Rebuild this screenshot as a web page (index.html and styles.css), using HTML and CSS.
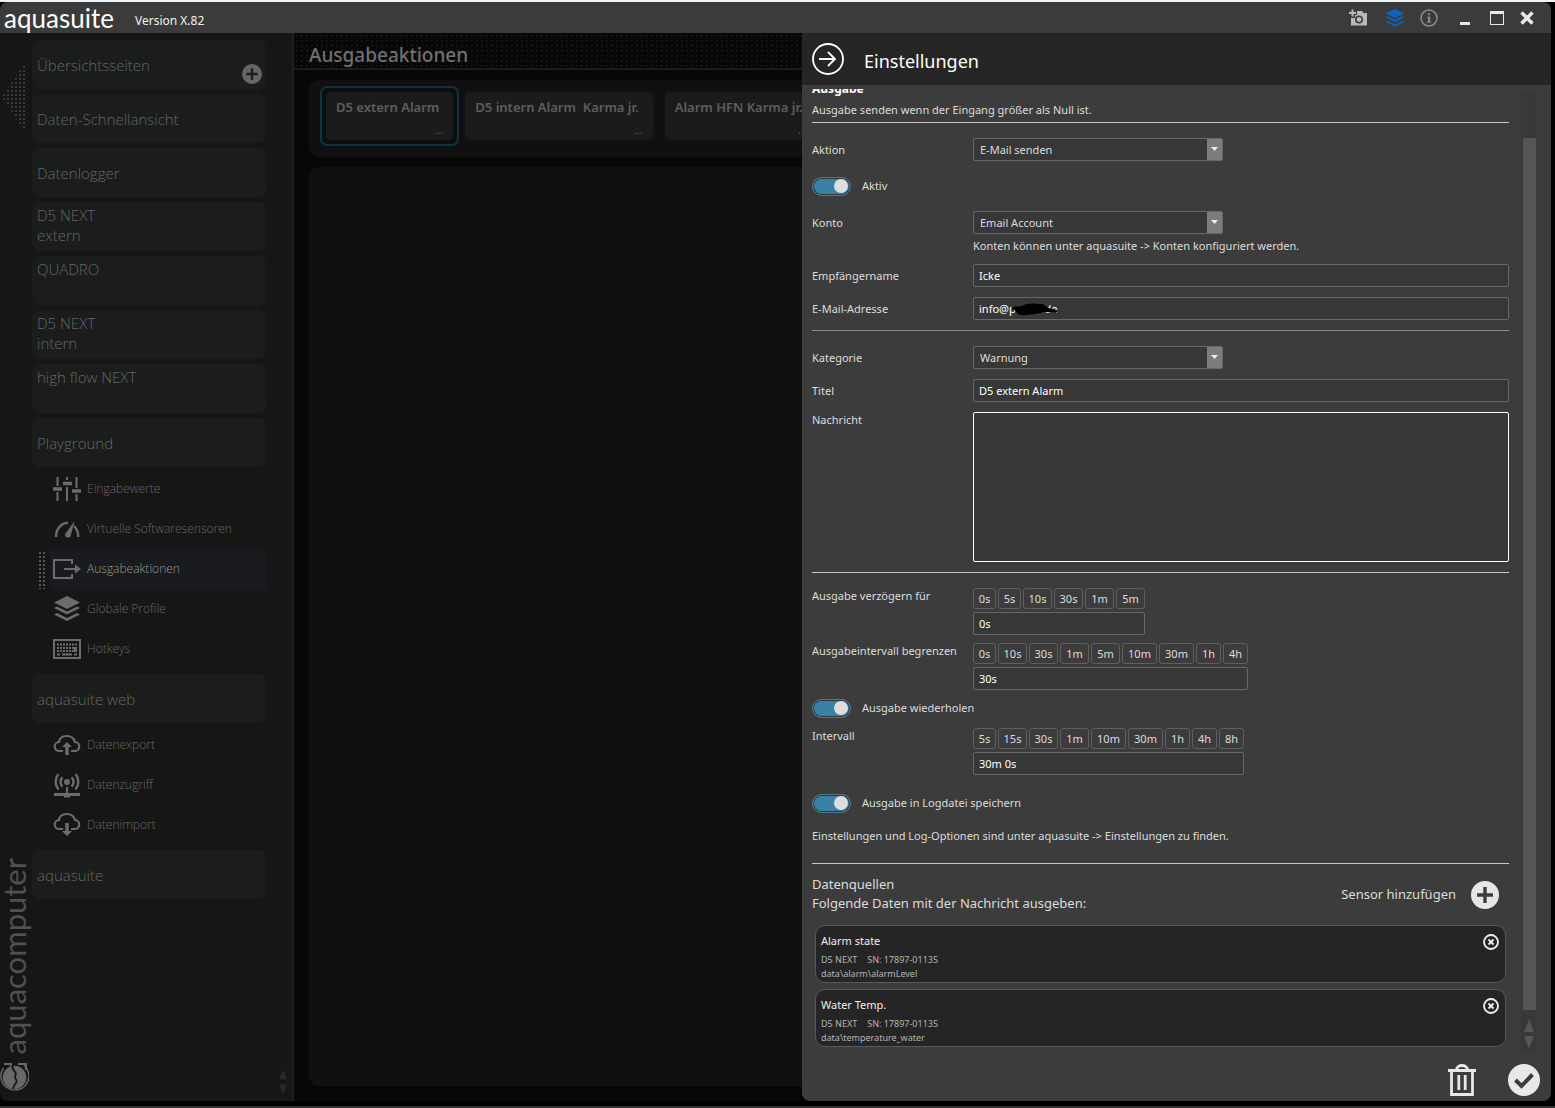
FILE: index.html
```html
<!DOCTYPE html>
<html lang="de">
<head>
<meta charset="utf-8">
<meta name="viewport" content="width=device-width, initial-scale=1">
<title>aquasuite</title>
<link rel="stylesheet" href="styles.css">
</head>
<body>
<svg class="defs" width="0" height="0" aria-hidden="true">
  <symbol id="i-layers" viewBox="0 0 28 28"><path d="M14 1 27 7.500 14 14 1 7.500z"/><path d="m1 13 3-1.500 10 5 10-5 3 1.500-13 6.500z"/><path d="m1 19.500 3-1.500 10 5 10-5 3 1.500L14 26z"/></symbol>
  <symbol id="i-plus" viewBox="0 0 28 28"><path fill-rule="evenodd" d="M14 0a14 14 0 1 1 0 28 14 14 0 0 1 0-28zM12.300 6v6.300H6v3.400h6.300V22h3.400v-6.300H22v-3.400h-6.300V6z"/></symbol>
  <symbol id="i-remove" viewBox="0 0 16 16"><circle cx="8" cy="8" r="7" fill="none" stroke="currentColor" stroke-width="1.800"/><path d="m5.500 5.500 5 5m0-5-5 5" stroke="currentColor" stroke-width="1.800"/></symbol>
</svg>
<div class="window">
  <header class="titlebar">
    <span class="logo">aquasuite</span>
    <span class="version">Version X.82</span>
    <div class="tools">
      <button type="button" class="tool-camera" aria-label="Screenshot"><svg width="19" height="17" viewBox="0 0 19 17"><path d="M0 3h2.500V.5h2V3H7v2H4.500v2.500h-2V5H0z"/><path fill-rule="evenodd" d="M8 2h5l1.500 2H18v12.500H2V9h4V6h2zm2 4.500a4 4 0 1 0 0 8 4 4 0 0 0 0-8z"/><circle cx="10" cy="10.500" r="2.400"/></svg></button>
      <button type="button" class="tool-layers" aria-label="Profile"><svg width="20" height="20"><use href="#i-layers"/></svg></button>
      <button type="button" class="tool-info" aria-label="Info"><svg width="18" height="18" viewBox="0 0 18 18"><circle cx="9" cy="9" r="8" fill="none" stroke="currentColor" stroke-width="1.600"/><path d="M7.500 7.500h2.700v5h1v1.200H7V12.500h1V8.700h-.8zM8 4.200h2v2H8z"/></svg></button>
      <button type="button" class="tool-min" aria-label="Minimieren"><svg width="10" height="14" viewBox="0 0 10 14"><path d="M0 11h10v3H0z"/></svg></button>
      <button type="button" class="tool-max" aria-label="Maximieren"><svg width="14" height="14" viewBox="0 0 14 14"><path fill-rule="evenodd" d="M0 0h14v14H0zm1 3v10h12V3z"/></svg></button>
      <button type="button" class="tool-close" aria-label="Beenden"><svg width="14" height="14" viewBox="0 0 14 14"><path d="m1.500 1.500 11 11m0-11-11 11" stroke="currentColor" stroke-width="3.400"/></svg></button>
    </div>
  </header>

  <div class="workspace">
    <aside class="sidebar">
      <div class="rail">
        <div class="collapse"></div>
        <div class="brand">
          <span class="brand-name">aquacomputer</span>
          <svg width="29" height="30" viewBox="0 0 29 30"><circle cx="14.500" cy="15.500" r="11.800"/><path d="M24 3.500A14 14 0 1 1 3.500 6" fill="none" stroke="currentColor" stroke-width="1.400"/><path d="M4 2h7v5M18 2h8v6" fill="none" stroke="currentColor" stroke-width="2"/><path d="M12.500 3c-2 5 5 6 3 10s2 4 1 7-4 3-3 7" fill="none" stroke="#161616" stroke-width="1.800"/></svg>
        </div>
      </div>
      <nav class="menu">
        <a class="item" href="#overview"><span>Übersichtsseiten</span><svg class="add" width="20" height="20"><use href="#i-plus"/></svg></a>
        <a class="item" href="#quick">Daten-Schnellansicht</a>
        <a class="item" href="#logger">Datenlogger</a>
        <a class="item device" href="#d5e">D5 NEXT<br>extern</a>
        <a class="item device" href="#quadro">QUADRO</a>
        <a class="item device" href="#d5i">D5 NEXT<br>intern</a>
        <a class="item device" href="#hfn">high flow NEXT</a>
        <div class="group">
          <a class="item" href="#playground">Playground</a>
          <a class="sub" href="#inputs"><svg width="28" height="28" viewBox="0 0 28 28"><path d="M3.500 2h2v9h-2zM3.500 17h2v9h-2zM13 2h2v3h-2zM13 12h2v14h-2zM22.500 2h2v11h-2zM22.500 19h2v7h-2z"/><path d="M0 14h9M10 8.500h9M19 16h9" stroke="currentColor" stroke-width="3.400"/></svg>Eingabewerte</a>
          <a class="sub" href="#virtual"><svg width="28" height="28" viewBox="0 0 28 28"><path d="M3 22c0-8 5-14 12-14.300M21 11c3 3 4.300 7 4.300 11" fill="none" stroke="currentColor" stroke-width="2.400"/><path d="m21.500 6-3.700 14.500a2.900 2.900 0 0 1-5.600-1.500z"/></svg>Virtuelle Softwaresensoren</a>
          <a class="sub selected" href="#outputs"><svg width="28" height="28" viewBox="0 0 28 28"><path d="M19 9V5H1v18h18v-4" fill="none" stroke="currentColor" stroke-width="2"/><path d="M11 13h11V9.500l6 4.500-6 4.500V15H11z"/></svg>Ausgabeaktionen</a>
          <a class="sub" href="#profiles"><svg width="28" height="28"><use href="#i-layers"/></svg>Globale Profile</a>
          <a class="sub" href="#hotkeys"><svg width="28" height="28" viewBox="0 0 28 28"><rect x="1" y="5" width="26" height="18" fill="none" stroke="currentColor" stroke-width="2"/><path d="M4 9.500h20M4 13h17M4 16h17" stroke="currentColor" stroke-width="2" stroke-dasharray="2 1"/><path d="M21 12h3v5h-3zM4 18.500h3v2H4zM9 18.500h10v2H9zM21 18.500h3v2h-3z"/></svg>Hotkeys</a>
        </div>
        <div class="group">
          <a class="item" href="#web">aquasuite web</a>
          <a class="sub" href="#export"><svg width="28" height="28" viewBox="0 0 28 28"><path d="M10 20H6.500A4.500 4.500 0 0 1 6 11c.5-4 4-6 8-6s7 2.500 8 6a4.500 4.500 0 0 1-.5 9H18" fill="none" stroke="currentColor" stroke-width="2.200"/><path d="M12.300 24v-8H9l5-5 5 5h-3.300v8z"/></svg>Datenexport</a>
          <a class="sub" href="#access"><svg width="28" height="28" viewBox="0 0 28 28"><circle cx="14" cy="11" r="3"/><path d="M9.500 6.500a6 6 0 0 0 0 9M18.500 6.500a6 6 0 0 1 0 9M5.500 3a12 12 0 0 0 0 15.500M22.500 3a12 12 0 0 1 0 15.500" fill="none" stroke="currentColor" stroke-width="2.400"/><path d="M13 16h2v6h12v3H17v1.500h-6V25H1v-3h12z"/></svg>Datenzugriff</a>
          <a class="sub" href="#import"><svg width="28" height="28" viewBox="0 0 28 28"><path d="M10 18H6.500A4.500 4.500 0 0 1 6 9c.5-4 4-6 8-6s7 2.500 8 6a4.500 4.500 0 0 1-.5 9H18" fill="none" stroke="currentColor" stroke-width="2.200"/><path d="M12.300 12v8H9l5 5 5-5h-3.300v-8z"/></svg>Datenimport</a>
        </div>
        <a class="item" href="#aquasuite">aquasuite</a>
      </nav>
      <svg class="arrows" width="10" height="30" viewBox="0 0 12 30"><path d="m6 0 5 12H1zM6 30 1 18h10z"/></svg>
    </aside>

    <main class="stage">
      <h1 class="stage-title">Ausgabeaktionen</h1>
      <div class="actions">
        <button type="button" class="action active"><span class="card"><span>D5 extern Alarm</span><span class="more">...</span></span></button>
        <button type="button" class="action"><span class="card"><span>D5 intern Alarm&nbsp; Karma jr.</span><span class="more">...</span></span></button>
        <button type="button" class="action"><span class="card"><span>Alarm HFN Karma jr.</span><span class="more">...</span></span></button>
      </div>
      <div class="canvas"></div>
    </main>

    <section class="drawer">
      <header class="drawer-head">
        <button type="button" aria-label="Schließen"><svg class="line" width="32" height="32" viewBox="0 0 32 32" stroke="currentColor" stroke-width="1.800"><circle cx="16" cy="16" r="15"/><path d="M7 16h16M16 9l7 7-7 7"/></svg></button>
        <h2>Einstellungen</h2>
      </header>
      <div class="drawer-body">
        <form class="form">
          <div class="intro">
            <h3>Ausgabe</h3>
            <p>Ausgabe senden wenn der Eingang größer als Null ist.</p>
          </div>
          <fieldset>
            <div class="row"><label for="action">Aktion</label><select id="action"><option>E-Mail senden</option></select></div>
            <label class="switch tall"><input type="checkbox" checked>Aktiv</label>
            <div class="row"><label for="account">Konto</label>
              <div class="stack"><select id="account"><option>Email Account</option></select><p class="hint">Konten können unter aquasuite -&gt; Konten konfiguriert werden.</p></div></div>
            <div class="row"><label for="name">Empfängername</label><input id="name" type="text" value="Icke"></div>
            <div class="row"><label for="mail">E-Mail-Adresse</label>
              <div class="masked"><input id="mail" type="text" value="info@p&nbsp;&nbsp;&nbsp;&nbsp;&nbsp;&nbsp;&nbsp;&nbsp;&nbsp;.de"><svg width="47" height="13" viewBox="0 0 47 13"><path d="M0 5c3-2 7-1 10-2 6-3 13-3 19-2 4 0 5 2 9 4l8 2-1 3-9-1c-4 1-8 1-12 2-7 1-14 2-17 0-2-2-3-4-7-6z"/></svg></div></div>
          </fieldset>
          <fieldset>
            <div class="row"><label for="category">Kategorie</label><select id="category"><option>Warnung</option></select></div>
            <div class="row"><label for="title">Titel</label><input id="title" type="text" value="D5 extern Alarm"></div>
            <div class="row"><label for="message">Nachricht</label><textarea id="message"></textarea></div>
          </fieldset>
          <fieldset class="timing">
            <div class="row"><label for="delay">Ausgabe verzögern für</label>
              <div class="preset"><div class="keys"><button type="button" class="k1">0s</button><button type="button" class="k1">5s</button><button type="button" class="k3">10s</button><button type="button" class="k3">30s</button><button type="button" class="k3">1m</button><button type="button" class="k3">5m</button></div><input id="delay" type="text" value="0s"></div></div>
            <div class="row"><label for="limit">Ausgabeintervall begrenzen</label>
              <div class="preset"><div class="keys"><button type="button" class="k1">0s</button><button type="button" class="k3">10s</button><button type="button" class="k3">30s</button><button type="button" class="k3">1m</button><button type="button" class="k3">5m</button><button type="button" class="k4">10m</button><button type="button" class="k4">30m</button><button type="button" class="k2">1h</button><button type="button" class="k2">4h</button></div><input id="limit" type="text" value="30s"></div></div>
            <label class="switch"><input type="checkbox" checked>Ausgabe wiederholen</label>
            <div class="row"><label for="interval">Intervall</label>
              <div class="preset"><div class="keys"><button type="button" class="k1">5s</button><button type="button" class="k3">15s</button><button type="button" class="k3">30s</button><button type="button" class="k3">1m</button><button type="button" class="k4">10m</button><button type="button" class="k4">30m</button><button type="button" class="k2">1h</button><button type="button" class="k2">4h</button><button type="button" class="k2">8h</button></div><input id="interval" type="text" value="30m 0s"></div></div>
            <label class="switch log"><input type="checkbox" checked>Ausgabe in Logdatei speichern</label>
            <p class="note">Einstellungen und Log-Optionen sind unter aquasuite -&gt; Einstellungen zu finden.</p>
          </fieldset>
          <div class="sources">
            <div class="sources-head">
              <p>Datenquellen<br>Folgende Daten mit der Nachricht ausgeben:</p>
              <button type="button">Sensor hinzufügen<svg width="28" height="28"><use href="#i-plus"/></svg></button>
            </div>
            <ul>
              <li><div><h4>Alarm state</h4><p><span>D5 NEXT</span><span>SN: 17897-01135</span></p><p>data\alarm\alarmLevel</p></div><button type="button" aria-label="Entfernen"><svg width="16" height="16"><use href="#i-remove"/></svg></button></li>
              <li><div><h4>Water Temp.</h4><p><span>D5 NEXT</span><span>SN: 17897-01135</span></p><p>data\temperature_water</p></div><button type="button" aria-label="Entfernen"><svg width="16" height="16"><use href="#i-remove"/></svg></button></li>
            </ul>
          </div>
        </form>
        <div class="scrollbar"><div class="thumb"></div><svg width="10" height="30" viewBox="0 0 10 30"><path d="m5 0 5 13H0zM5 30 0 17h10z"/></svg></div>
      </div>
      <footer class="drawer-foot">
        <button type="button" aria-label="Löschen"><svg class="line" width="28" height="32" viewBox="0 0 28 32" stroke="currentColor" stroke-width="2.800"><path d="M0 6.500h28M8.500 6c0-6 11-6 11 0M3.500 6.500v24h21v-24"/><path d="M10.800 11v15M17.200 11v15"/></svg></button>
        <button type="button" aria-label="Übernehmen"><svg width="32" height="32" viewBox="0 0 32 32"><circle cx="16" cy="16" r="16"/><path d="m7.500 16 6 6 11-11.500" fill="none" stroke="#3c3c3c" stroke-width="4"/></svg></button>
      </footer>
    </section>
  </div>
</div>
</body>
</html>
```
FILE: styles.css
```css
* { box-sizing: border-box; }

body {
  margin: 0;
  background: #000;
  color: #dcdcdc;
  font: 11px/16px "Noto Sans", sans-serif;
}

h1, h2, h3, h4, p, ul, fieldset { margin: 0; padding: 0; border: 0; font-weight: 400; list-style: none; }
button, input, select, textarea { font: inherit; color: inherit; margin: 0; }
button { background: none; border: 0; padding: 0; display: flex; align-items: center; }
a { color: inherit; text-decoration: none; }
svg { display: block; fill: currentColor; flex: none; }
.line { fill: none; }
.defs { position: absolute; }

.window {
  display: grid;
  grid-template-rows: 31px 1fr;
  min-height: 100vh;
  padding: 0 4px 5px 0;
  border-top: 2px solid #f0f3f5;
  border-bottom: 2px solid #333;
}

/* Title bar */
.titlebar {
  display: flex;
  align-items: center;
  padding: 0 17px 0 4px;
  background: #3b3b3b;
  border-radius: 8px 8px 0 0;
  color: #f0f0f0;
}
.logo { width: 131px; font: 26px/28px Lato, sans-serif; color: #fff; }
.version { padding-top: 6px; font-size: 12px; }
.tools { display: flex; align-items: center; margin-left: auto; color: #e8e8e8; }
.tool-camera { color: #b8b8b8; margin-right: 17px; }
.tool-layers { color: #0e63bd; margin-right: 15px; }
.tool-info { color: #888; margin-right: 22px; }
.tool-min { margin-right: 20px; }
.tool-max { margin-right: 16px; }

.workspace { display: grid; grid-template-columns: 294px minmax(0, 1fr) 749px; background: #070707; }

/* Sidebar */
.sidebar {
  display: flex;
  background: #161616;
  border-right: 2px solid #1f1f1f;
  border-radius: 0 0 0 8px;
  color: #646666;
}
.rail { display: flex; flex-direction: column; justify-content: space-between; width: 32px; padding: 28px 0 9px; }
.collapse {
  width: 24px;
  height: 72px;
  margin-left: 2px;
  background: radial-gradient(circle, #3c3c3c 1px, transparent 1px) 0 0 / 4px 4px;
  clip-path: polygon(100% 0, 100% 100%, 0 50%);
}
.brand { display: flex; flex-direction: column; align-items: flex-start; gap: 8px; color: #686868; }
.brand-name { writing-mode: vertical-rl; transform: rotate(180deg); font: 31px/28px Lato, sans-serif; color: #505050; }

.menu { display: flex; flex-direction: column; gap: 5px; width: 234px; padding-top: 7px; }
.item {
  display: flex;
  align-items: center;
  justify-content: space-between;
  height: 49px;
  padding: 0 4px 0 5px;
  border-radius: 8px;
  background: #1b1d1c;
  font: 300 15px/20px "Open Sans", sans-serif;
}
.device { align-items: flex-start; justify-content: flex-start; padding-top: 3px; }
.add { margin-top: 18px; color: #666; }
.group .item { margin-bottom: 2px; }
.sub { display: flex; align-items: center; gap: 6px; height: 40px; padding-left: 21px; color: #686868; font: 300 12px/16px "Open Sans", sans-serif; }
.selected {
  position: relative;
  background: linear-gradient(90deg, transparent 18px, #191b1e 18px);
  color: #999;
}
.selected::before {
  content: "";
  position: absolute;
  left: 6px;
  top: 2px;
  width: 8px;
  height: 38px;
  background: radial-gradient(circle, #555 1px, transparent 1px) 0 0 / 4px 4px;
}
.sub svg { color: #6c6c6c; }
.arrows { margin: auto 4px 4px auto; color: #292929; }

/* Main stage behind the drawer */
.stage { display: flex; flex-direction: column; overflow: hidden; padding-bottom: 15px; }
.stage-title {
  padding: 9px 15px 0;
  border-bottom: 2px solid #1c1c1c;
  background: radial-gradient(circle, #181818 1px, transparent 1px) 0 0 / 5px 5px;
  color: #707070;
  font: 500 19px/26px "Noto Sans", sans-serif;
}
.actions {
  display: flex;
  height: 77px;
  margin: 10px 0 10px 15px;
  padding: 6px 11px;
  border-radius: 10px 0 0 10px;
  background: #101010;
}
.action { height: 60px; padding: 4px; border: 2px solid transparent; border-radius: 7px; color: #5e5e5e; flex: none; }
.active { background: #0c0f11; border-color: #12323d; }
.card {
  display: flex;
  flex-direction: column;
  justify-content: space-between;
  height: 48px;
  padding: 7px 14px 3px 10px;
  border-radius: 5px;
  background: #1b1b1b;
  text-align: left;
  white-space: nowrap;
  font: 600 13px/16px "Noto Sans", sans-serif;
}
.more { align-self: flex-end; margin-right: -4px; font-size: 11px; line-height: 14px; font-weight: 400; }
.canvas { flex: 1; margin-left: 15px; border-radius: 10px 0 0 10px; background: #101010; }

/* Settings drawer */
.drawer { display: flex; flex-direction: column; background: #3c3c3c; border-radius: 0 0 8px 8px; }
.drawer-head { display: flex; align-items: center; gap: 20px; height: 52px; padding-left: 10px; background: #252526; color: #fff; }
.drawer-head h2 { padding-top: 3px; font-size: 18px; line-height: 26px; }
.drawer-body { display: flex; gap: 12px; flex: 1; padding: 4px 14px 3px 10px; }
.form { flex: 1; overflow: hidden; }
.intro { padding-bottom: 4px; }
.intro h3 { margin-top: -8px; margin-bottom: 5px; font-size: 12px; font-weight: 700; color: #fff; }

fieldset { display: flex; flex-direction: column; gap: 10px; padding: 15px 0 10px; border-top: 1px solid #c8c8c8; min-width: 0; }
fieldset + fieldset { border-top-color: #8a8a8a; }
fieldset.timing { gap: 8px; padding-bottom: 19px; border-top-color: #c8c8c8; }
.row { display: grid; grid-template-columns: 161px minmax(0, 1fr); align-items: start; }
.row label { padding-top: 4px; }
.timing .row label { padding-top: 0; }

input[type=text], select, textarea {
  width: 100%;
  height: 23px;
  padding: 0 5px;
  border: 1px solid #686868;
  border-radius: 2px;
  background: #373737;
  outline: 0;
}
input[type=text] { color: #fff; }
select {
  display: block;
  width: 250px;
  appearance: none;
  padding-left: 6px;
  background:
    url("data:image/svg+xml,%3Csvg xmlns='http://www.w3.org/2000/svg' width='15' height='21'%3E%3Cpath fill='%237c7c7c' d='M0 0h15v21H0z'/%3E%3Cpath fill='%23eee' d='M4 8h7l-3.500 4z'/%3E%3C/svg%3E") right center no-repeat,
    #373737;
}
textarea { display: block; height: 150px; border-color: #fff; resize: none; }
.row > label[for=message] { padding-top: 0; }
.hint { margin-top: 4px; }
.masked { position: relative; }
.masked input { display: block; }
.masked svg { position: absolute; left: 38px; top: 6px; color: #000; }

.switch { display: flex; align-items: center; gap: 11px; height: 20px; }
.tall { height: 30px; }
.switch input {
  appearance: none;
  display: flex;
  align-items: center;
  justify-content: flex-end;
  width: 39px;
  height: 19px;
  padding: 1px;
  border: 1px solid #54798a;
  border-radius: 10px;
  background: #3a81a6;
  box-shadow: inset 0 0 0 1px #353535;
}
.switch input::before { content: ""; width: 14px; height: 14px; margin-right: 1px; border-radius: 50%; background: #dedede; }
.timing .switch + .row { margin-top: 2px; }
.log { margin-top: 10px; }
.note { margin-top: 7px; }

.preset { display: flex; flex-direction: column; gap: 3px; width: max-content; }
.preset input[type=text] { width: 0; min-width: 100%; }
.keys { display: flex; gap: 2px; }
.keys button { justify-content: center; height: 21px; border: 1px solid #5f5f5f; border-radius: 3px; }
.k1 { width: 23px; }
.k2 { width: 25px; }
.k3 { width: 29px; }
.k4 { width: 35px; }

.sources { border-top: 1px solid #c8c8c8; padding: 11px 3px 0; }
.sources-head { display: flex; justify-content: space-between; align-items: center; margin: 0 7px 11px -3px; font-size: 13px; line-height: 19px; }
.sources-head p { padding-bottom: 1px; }
.sources-head button { gap: 15px; }
.sources-head svg { color: #e6e6e6; }
.sources ul { display: grid; gap: 6px; }
.sources li {
  display: flex;
  justify-content: space-between;
  align-items: flex-start;
  height: 58px;
  padding: 7px 6px 0 5px;
  border: 1px solid #585858;
  border-radius: 10px;
  background: #252525;
  color: #b4b4b4;
  font-size: 9px;
  line-height: 14px;
}
.sources h4 { margin-bottom: 4px; font-size: 11px; line-height: 16px; color: #eee; }
.sources li p { display: flex; gap: 10px; }
.sources li button { padding-top: 1px; color: #f0f0f0; }

.scrollbar { display: flex; flex-direction: column; align-items: center; width: 16px; margin-top: 3px; padding: 46px 0 3px; background: #383838; color: #555; }
.thumb { flex: 1; width: 13px; margin-bottom: 9px; background: #555; }

.drawer-foot { display: flex; justify-content: flex-end; align-items: center; gap: 32px; height: 46px; padding: 4px 11px 0 0; color: #e8e8e8; }
```
